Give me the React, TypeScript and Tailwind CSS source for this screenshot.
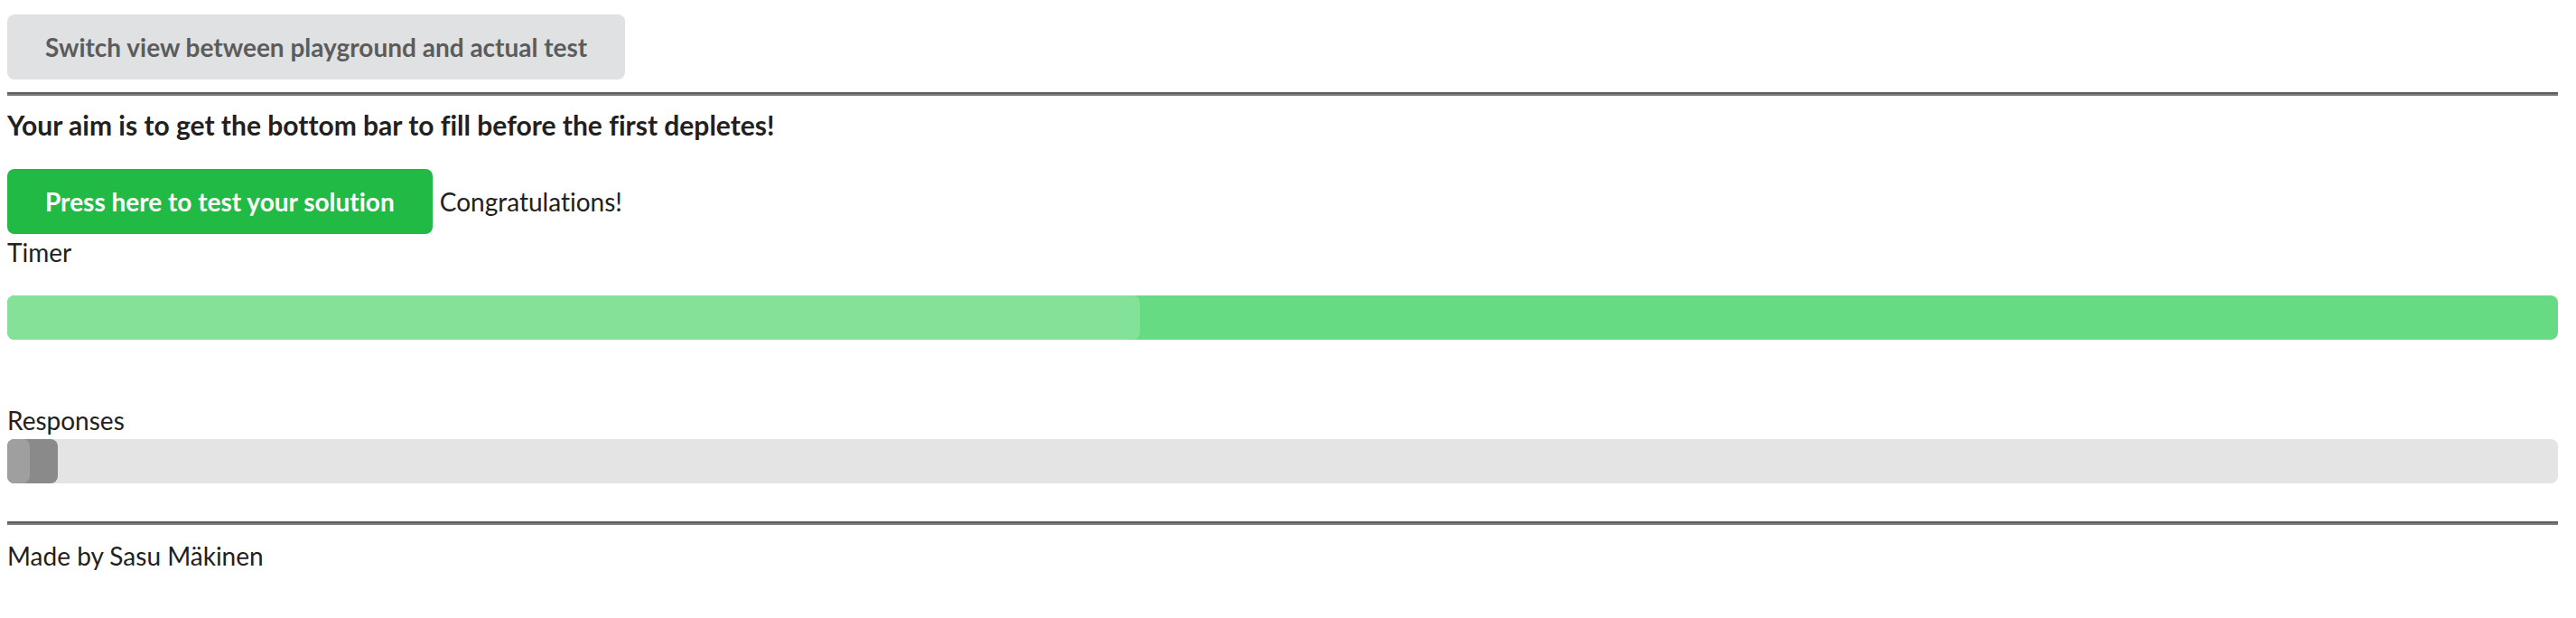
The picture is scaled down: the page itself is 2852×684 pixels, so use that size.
export default function App() {
    return (
        <div className="bg-white min-h-screen pl-[8px] pr-[20px] pt-[16px] font-['Lato',sans-serif] text-[28px] leading-[40px] text-[#212121] [font-variant-ligatures:none]">
            {/* Mode switch */}
            <button className="h-[72px] px-[42px] rounded-[8px] bg-[#e0e1e2] text-[#5c5c5c] font-bold text-[28px] leading-[28px]">
                Switch view between playground and actual test
            </button>

            <hr className="mt-[14px] border-0 border-t-2 border-b-2 border-t-[#5f5f5f] border-b-[#7a7a7a]" />

            <h4 className="mt-[13px] text-[30px] leading-[38px] font-bold">
                Your aim is to get the bottom bar to fill before the first depletes!
            </h4>

            <div className="mt-[30px] flex items-center gap-[8px]">
                <button className="h-[72px] px-[42px] rounded-[8px] bg-[#21ba45] text-white font-bold text-[28px] leading-[28px]">
                    Press here to test your solution
                </button>
                <span>Congratulations!</span>
            </div>

            {/* Timer */}
            <div>Timer</div>
            <div className="mt-[28px] h-[49px] rounded-[8px] bg-[#67db83] overflow-hidden">
                <div className="h-full w-[1254px] rounded-r-[8px] bg-[#84e298]" />
            </div>

            {/* Responses */}
            <div className="mt-[69px]">Responses</div>
            <div className="mt-[1px] h-[49px] rounded-[8px] bg-[#e4e4e4]">
                <div className="h-full w-[56px] rounded-[8px] bg-[#8a8a8a] overflow-hidden">
                    <div className="h-full w-[25px] rounded-r-[8px] bg-[#9f9f9f]" />
                </div>
            </div>

            <hr className="mt-[42px] border-0 border-t-2 border-b-2 border-t-[#5f5f5f] border-b-[#7a7a7a]" />

            <div className="mt-[14px]">Made by Sasu Mäkinen</div>
        </div>
    );
}
